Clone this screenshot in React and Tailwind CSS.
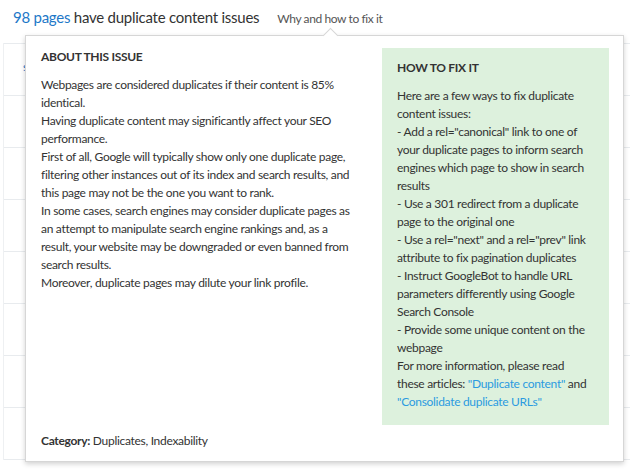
import React from "react";

const Line = ({ children }) => <div className="whitespace-nowrap">{children}</div>;

export default function App() {
  return (
    <div className="relative w-[630px] h-[469px] bg-white overflow-hidden text-[#333] font-['Lato','Liberation_Sans',sans-serif]">
      {/* header */}
      <div className="flex items-baseline pl-[13px] pt-[6px] h-[34px]">
        <span className="text-[15px] tracking-[-0.25px] text-[#333]">
          <span className="text-[#1d78c8]">98 pages</span> have duplicate content issues
        </span>
        <span className="ml-[18px] text-[12px] tracking-[-0.4px] text-[#555]">Why and how to fix it</span>
      </div>

      {/* background table */}
      <div className="ml-[3px] mt-[9px] border-l border-[#eef0f2]">
        {[0, 1, 2, 3, 4, 5, 6, 7].map((i) => (
          <div key={i} className="h-[52px] border-t border-[#e8ebee] pl-[19px] pt-[14px] text-[12px] text-[#1d78c8]">
            {i === 0 ? "s" : ""}
          </div>
        ))}
        <div className="border-t border-[#e8ebee]" />
      </div>

      {/* popover */}
      <div className="absolute left-[25px] top-[35px] w-[599px] h-[427px] bg-white border border-[#d6d6d6] shadow-[0_2px_5px_rgba(0,0,0,0.18)] text-[12px] leading-[18px] tracking-[-0.3px] flex flex-col">
        <div className="absolute -top-[6px] left-[299px] w-[11px] h-[11px] bg-white border-t border-l border-[#d6d6d6] rotate-45" />
        <div className="flex flex-1 pl-[15px] pr-[14px] pt-[12px]">
          <div className="flex-1">
            <div className="font-bold">ABOUT THIS ISSUE</div>
            <div className="mt-[10px]">
              <Line>Webpages are considered duplicates if their content is 85%</Line>
              <Line>identical.</Line>
              <Line>Having duplicate content may significantly affect your SEO</Line>
              <Line>performance.</Line>
              <Line>First of all, Google will typically show only one duplicate page,</Line>
              <Line>filtering other instances out of its index and search results, and</Line>
              <Line>this page may not be the one you want to rank.</Line>
              <Line>In some cases, search engines may consider duplicate pages as</Line>
              <Line>an attempt to manipulate search engine rankings and, as a</Line>
              <Line>result, your website may be downgraded or even banned from</Line>
              <Line>search results.</Line>
              <Line>Moreover, duplicate pages may dilute your link profile.</Line>
            </div>
          </div>
          <div className="w-[227px] h-[377px] bg-[#ddf1dd] pl-[15px] pt-[11px]">
            <div className="font-bold">HOW TO FIX IT</div>
            <div className="mt-[10px]">
              <Line>Here are a few ways to fix duplicate</Line>
              <Line>content issues:</Line>
              <Line>- Add a rel="canonical" link to one of</Line>
              <Line>your duplicate pages to inform search</Line>
              <Line>engines which page to show in search</Line>
              <Line>results</Line>
              <Line>- Use a 301 redirect from a duplicate</Line>
              <Line>page to the original one</Line>
              <Line>- Use a rel="next" and a rel="prev" link</Line>
              <Line>attribute to fix pagination duplicates</Line>
              <Line>- Instruct GoogleBot to handle URL</Line>
              <Line>parameters differently using Google</Line>
              <Line>Search Console</Line>
              <Line>- Provide some unique content on the</Line>
              <Line>webpage</Line>
              <Line>For more information, please read</Line>
              <Line>
                these articles: <span className="text-[#2b9be0]">"Duplicate content"</span> and
              </Line>
              <Line>
                <span className="text-[#2b9be0]">"Consolidate duplicate URLs"</span>
              </Line>
            </div>
          </div>
        </div>
        <div className="pl-[15px] pb-[11px]">
          <span className="font-bold">Category:</span> Duplicates, Indexability
        </div>
      </div>
    </div>
  );
}
